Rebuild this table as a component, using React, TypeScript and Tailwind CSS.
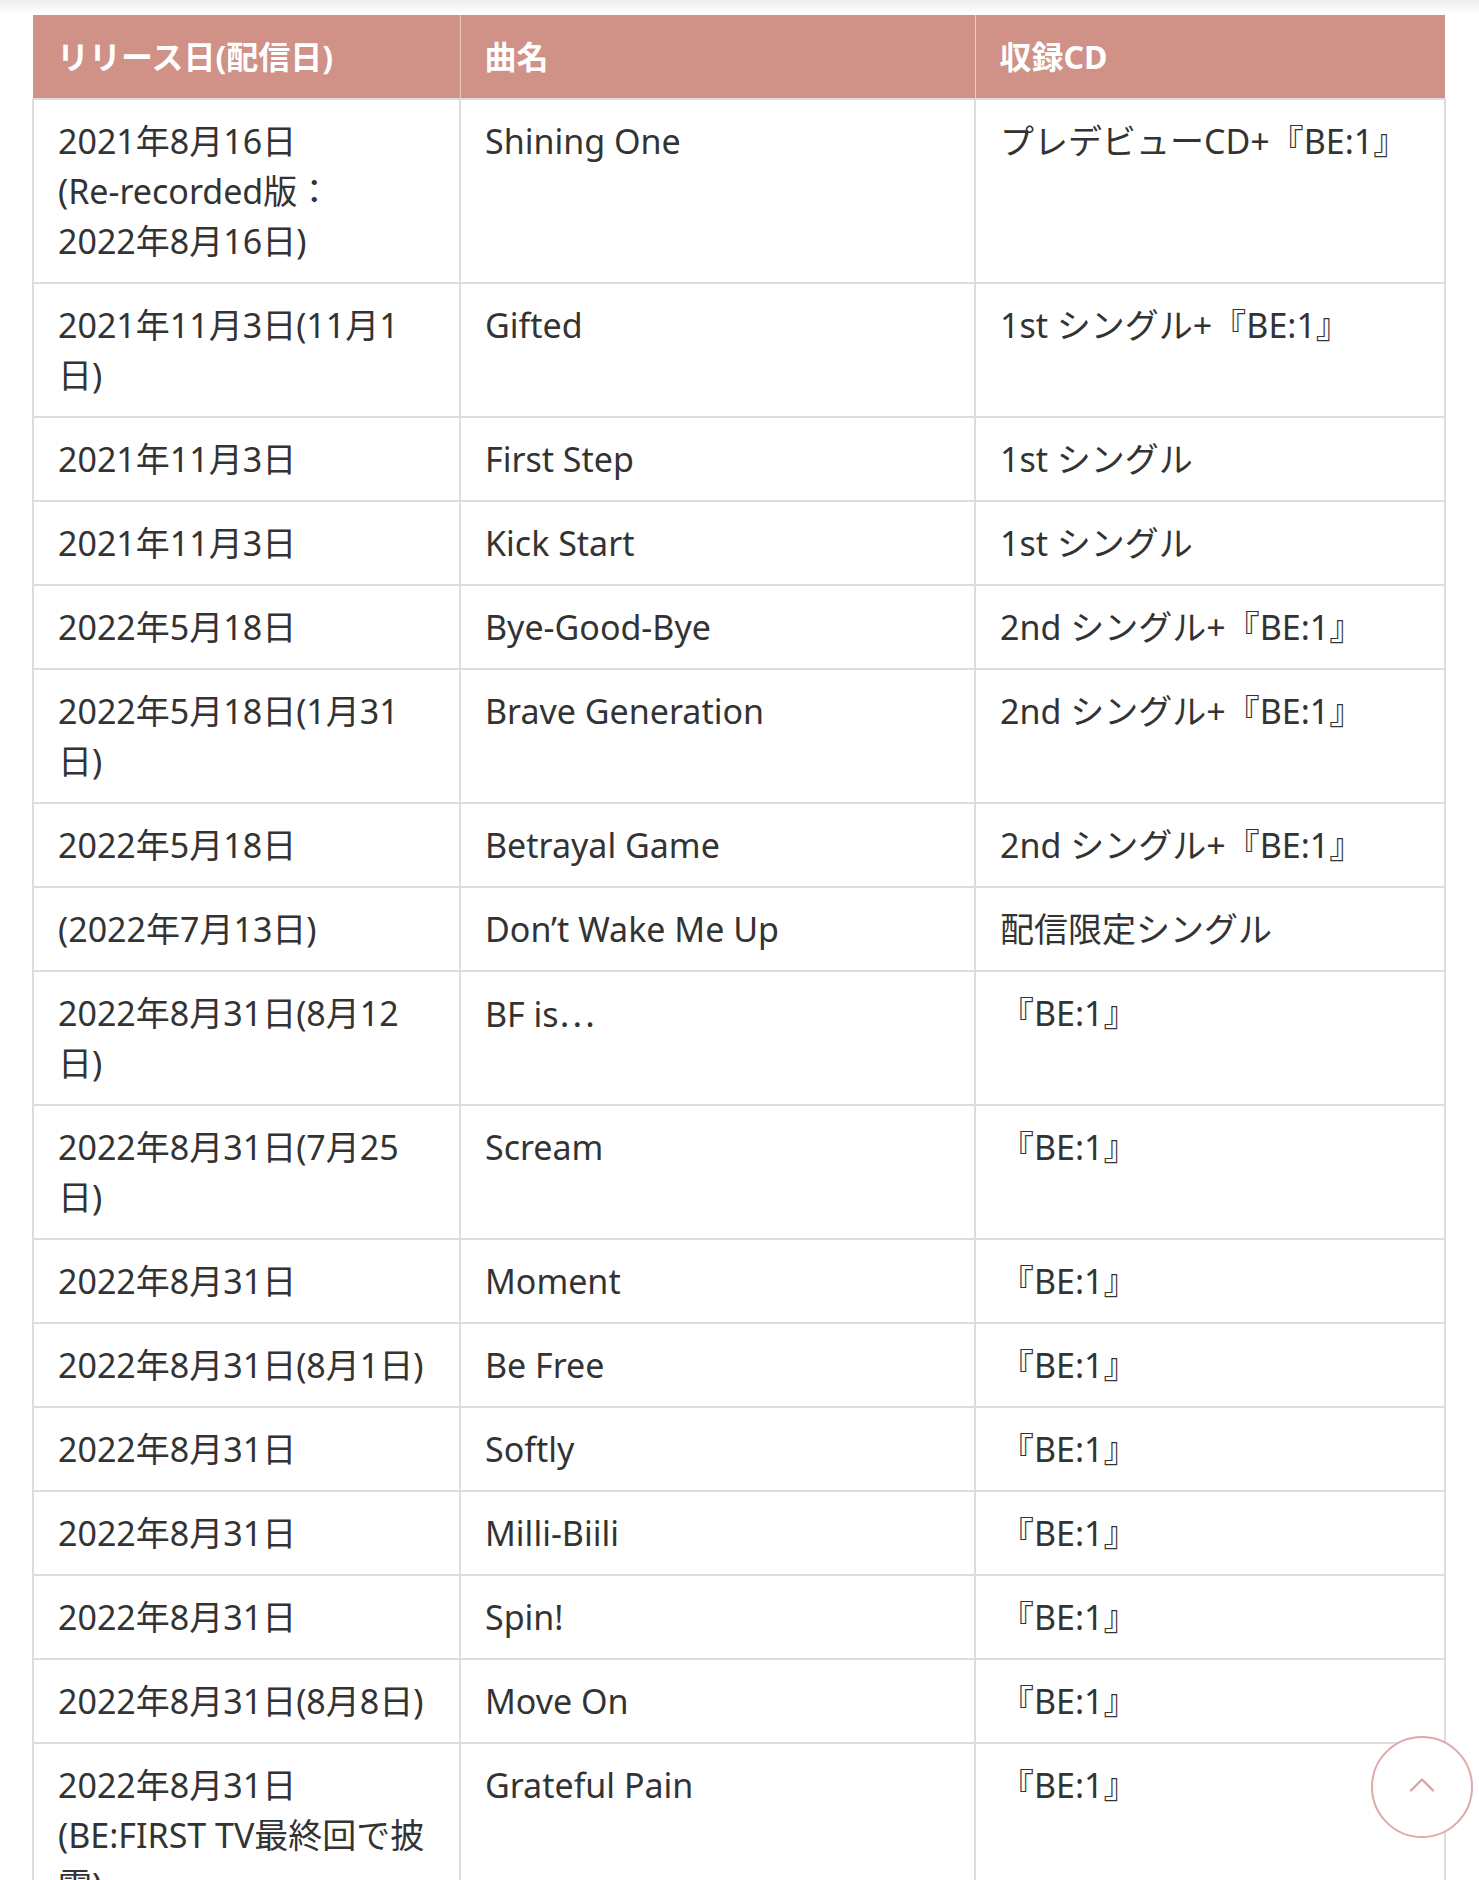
import { ChevronUp } from 'lucide-react';

// Release list for BE:FIRST tracks
const rows = [
  { date: '2021年8月16日\n(Re-recorded版：\n2022年8月16日)', title: 'Shining One', cd: 'プレデビューCD+『BE:1』' },
  { date: '2021年11月3日(11月1日)', title: 'Gifted', cd: '1st シングル+『BE:1』' },
  { date: '2021年11月3日', title: 'First Step', cd: '1st シングル' },
  { date: '2021年11月3日', title: 'Kick Start', cd: '1st シングル' },
  { date: '2022年5月18日', title: 'Bye-Good-Bye', cd: '2nd シングル+『BE:1』' },
  { date: '2022年5月18日(1月31日)', title: 'Brave Generation', cd: '2nd シングル+『BE:1』' },
  { date: '2022年5月18日', title: 'Betrayal Game', cd: '2nd シングル+『BE:1』' },
  { date: '(2022年7月13日)', title: 'Don’t Wake Me Up', cd: '配信限定シングル' },
  { date: '2022年8月31日(8月12日)', title: 'BF is…', cd: '『BE:1』' },
  { date: '2022年8月31日(7月25日)', title: 'Scream', cd: '『BE:1』' },
  { date: '2022年8月31日', title: 'Moment', cd: '『BE:1』' },
  { date: '2022年8月31日(8月1日)', title: 'Be Free', cd: '『BE:1』' },
  { date: '2022年8月31日', title: 'Softly', cd: '『BE:1』' },
  { date: '2022年8月31日', title: 'Milli-Biili', cd: '『BE:1』' },
  { date: '2022年8月31日', title: 'Spin!', cd: '『BE:1』' },
  { date: '2022年8月31日(8月8日)', title: 'Move On', cd: '『BE:1』' },
  { date: '2022年8月31日\n(BE:FIRST TV最終回で披露)', title: 'Grateful Pain', cd: '『BE:1』' },
];

function Title({ text }: { text: string }) {
  // the ellipsis is drawn centred, as a Japanese font does
  if (text.endsWith('…')) {
    return (
      <>
        {text.slice(0, -1)}
        <span className="font-['Noto_Sans_CJK_JP',sans-serif]">…</span>
      </>
    );
  }
  return <>{text}</>;
}

export default function App() {
  return (
    <main className="relative h-[1880px] overflow-hidden bg-white font-['Noto_Sans','Noto_Sans_CJK_JP',sans-serif] text-[#333333]">
      <div className="h-[15px] bg-gradient-to-b from-[#efefef] via-[#f7f7f7] to-white" />

      <div className="pl-[32px]">
        <table className="w-[1412px] table-fixed border-collapse">
          <colgroup>
            <col className="w-[427px]" />
            <col className="w-[515px]" />
            <col className="w-[470px]" />
          </colgroup>
          <thead>
            <tr className="h-[84px] bg-[#d09187] text-left text-[32px] font-bold text-white">
              <th className="px-[24px] font-bold">リリース日(配信日)</th>
              <th className="border-l border-[#ecc9bf] px-[24px] font-bold">曲名</th>
              <th className="border-l border-[#ecc9bf] px-[24px] font-bold">収録CD</th>
            </tr>
          </thead>
          <tbody>
            {rows.map((row, i) => (
              <tr key={i} className="align-top text-[34px] leading-[50px]">
                <td className="whitespace-pre-line border-2 border-[#dddddd] px-[24px] py-[16px]">{row.date}</td>
                <td className="border-2 border-[#dddddd] px-[24px] py-[16px]">
                  <Title text={row.title} />
                </td>
                <td className="border-2 border-[#dddddd] px-[24px] py-[16px]">{row.cd}</td>
              </tr>
            ))}
          </tbody>
        </table>
      </div>

      <button
        type="button"
        className="fixed left-[1371px] top-[1736px] flex h-[102px] w-[102px] items-center justify-center rounded-full border-2 border-[#dcaaa9] bg-white/95"
      >
        <ChevronUp className="mb-[4px] h-[44px] w-[44px] text-[#d8a3a0]" strokeWidth={1.3} />
      </button>
    </main>
  );
}
